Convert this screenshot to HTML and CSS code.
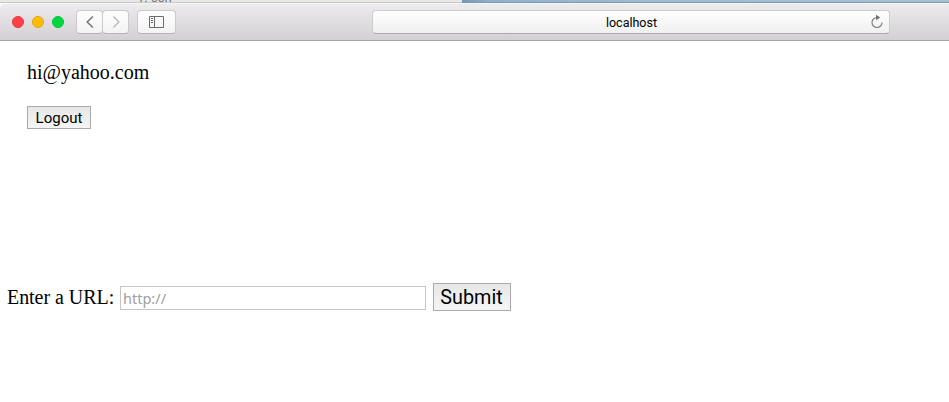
FILE: index.html
```
<!DOCTYPE html>
<html lang="en">
<head>
<meta charset="utf-8">
<title>localhost</title>
<link rel="stylesheet" href="styles.css">
</head>
<body>
<div class="desktop"><div class="terminal"><span>1. ssh</span></div><div class="wallpaper"></div></div>
<header class="toolbar">
  <div class="lights"><i class="red"></i><i class="yellow"></i><i class="green"></i></div>
  <div class="nav">
    <span class="tool"><svg width="24" height="22" viewBox="0 0 24 22"><path d="M14.8 5.5 9.2 11l5.6 5.5" fill="none" stroke="#737373" stroke-width="1.5"/></svg></span>
    <span class="tool"><svg width="24" height="22" viewBox="0 0 24 22"><path d="M9.3 5.5 14.9 11l-5.6 5.5" fill="none" stroke="#bcbcbc" stroke-width="1.5"/></svg></span>
  </div>
  <span class="tool sidebar"><svg width="15" height="12" viewBox="0 0 15 12"><path d="M.5.5h14v11H.5zM5.5.5v11M2 2.5h2M2 4.5h2M2 6.5h2" fill="none" stroke="#6b6b6b"/></svg></span>
  <div class="address"><span class="host">localhost</span><svg class="reload" width="14" height="16" viewBox="0 0 14 16"><path d="M7 3.5A5 5 0 1 0 12 8.5" fill="none" stroke="#808080" stroke-width="1.2"/><path d="M6 .8 10.3 3.6 6 6.2z" fill="#707070"/></svg></div>
</header>
<main>
  <section class="account">
    <p class="email">hi@yahoo.com</p>
    <button class="logout">Logout</button>
  </section>
  <form class="url-form">
    <label for="url">Enter a URL:</label>
    <input id="url" type="text" placeholder="http://">
    <button class="submit" type="button">Submit</button>
  </form>
</main>
</body>
</html>
```
FILE: styles.css
```
* { box-sizing: border-box; }
body { margin: 0; height: 402px; overflow: hidden; background: #fff; color: #000; font-family: "Liberation Serif", serif; }
.desktop { display: flex; height: 3px; }
.terminal { width: 462px; height: 3px; overflow: hidden; background: #e8e8e6; border-bottom: 1px solid #c8c8c6; padding-left: 137px; display: flex; align-items: flex-end; font: 13px/14px Roboto, sans-serif; color: #777; }
.terminal span { height: 14px; margin-bottom: -3px; }
.wallpaper { flex: 1; background: linear-gradient(90deg, #7698b7, #8fb2d0 6%, #9dbdd5 40%, #a5bfd3); border-bottom: 1px solid #7e98ad; }
.toolbar { display: flex; height: 38px; padding: 7px 59px 0 12px; background: linear-gradient(#edebed, #d3d0d3); border-top: 1px solid #f8f7f8; border-bottom: 1px solid #a5a2a5; border-top-left-radius: 5px; }
.lights { display: flex; gap: 8px; padding-top: 5px; width: 64px; }
.lights i { flex: none; width: 12px; height: 12px; border-width: 1px; border-style: solid; border-radius: 50%; }
.red { background: #ff3f4a; border-color: #e7353f; }
.yellow { background: #ffbd00; border-color: #e4a510; }
.green { background: #00d742; border-color: #0fc03b; }
.nav { display: flex; }
.tool { display: flex; align-items: center; justify-content: center; width: 27px; height: 24px; margin-top: -1px; border: 1px solid #cbc9cb; border-bottom-color: #b5b2b5; border-radius: 4px; background: linear-gradient(#fefefe, #f3f3f3); }
.nav .tool + .tool { margin-left: -1px; }
.sidebar { width: 39px; margin-left: 8px; }
.address { display: flex; align-items: center; flex: 1; height: 24px; margin: -1px 0 0 196px; padding: 1px 5px 0 20px; border: 1px solid #cdcbcd; border-bottom-color: #aaa7aa; border-radius: 4px; background: linear-gradient(#fff, #f0f0f0); font: 12.5px/20px Roboto, sans-serif; }
.host { flex: 1; text-align: center; }
.reload { margin-top: -1px; }
.account { padding: 20px 0 0 27px; height: 242px; }
.email { margin: 0; height: 45px; font-size: 20px; line-height: 23px; }
button { display: flex; align-items: center; justify-content: center; padding: 0; border: 1px solid #a9a9a9; border-radius: 0; background: linear-gradient(#e7e7e7, #f5f5f5); color: #000; font-family: Roboto, sans-serif; }
.logout { width: 64px; height: 23px; font-size: 15px; }
.url-form { display: flex; align-items: center; padding-left: 7px; height: 28px; }
label { width: 113px; font-size: 20px; line-height: 23px; letter-spacing: -0.05px; white-space: nowrap; }
input { width: 306px; height: 24px; margin: 2px 7px 0 0; padding: 1px 2px; border: 1px solid #c5c5c5; border-radius: 0; font: 14.5px "Noto Sans", sans-serif; }
input::placeholder { color: #a0a0a0; }
.submit { width: 78px; height: 28px; padding-right: 1px; font-size: 19.8px; }
```
